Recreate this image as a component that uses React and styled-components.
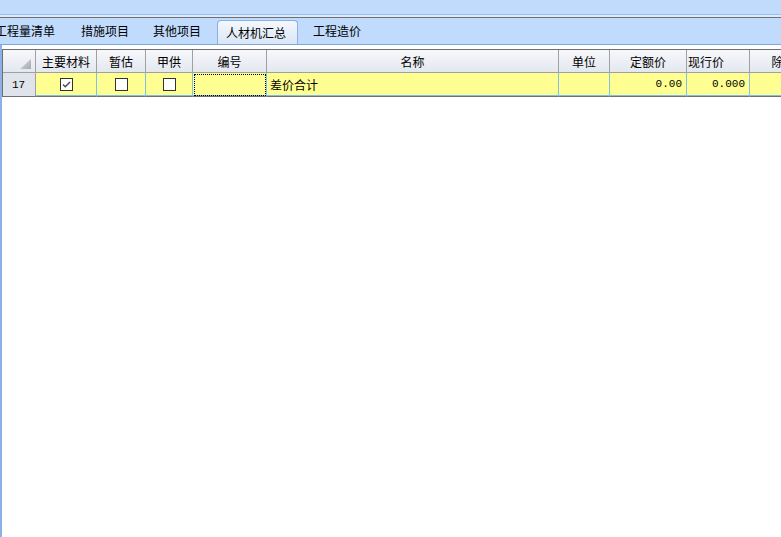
import React from 'react'
import styled, { createGlobalStyle } from 'styled-components'

const GlobalStyle = createGlobalStyle`
  html, body {
    margin: 0;
    padding: 0;
    background: #ffffff;
  }
  body {
    width: 781px;
    height: 537px;
    overflow: hidden;
    font-family: "Noto Sans CJK SC", "Liberation Sans", sans-serif;
    font-size: 12px;
    color: #000;
  }
`

const Page = styled.div`
  width: 781px;
  height: 537px;
  display: flex;
  flex-direction: column;
  overflow: hidden;
`

const TopBand = styled.div`
  height: 14px;
  background: #c1dbfc;
  border-bottom: 1px solid #9ec0ee;
`

const TopGap = styled.div`
  height: 2px;
  background: #dceafd;
  border-bottom: 1px solid #6f6f6f;
`

const TabStrip = styled.div`
  height: 26px;
  background: #c1dbfc;
  border-bottom: 1px solid #7ea6de;
  display: flex;
  align-items: flex-end;
  margin-left: -17px;
  box-sizing: content-box;
`

const Tab = styled.div`
  height: ${p => (p.$active ? '24px' : '26px')};
  padding: ${p => (p.$active ? '0 11px 1px 8px' : '0 12px 2px 12px')};
  margin: ${p => (p.$active ? '0 3px 0 4px' : '0')};
  display: flex;
  align-items: center;
  white-space: nowrap;
  box-sizing: border-box;
  ${p =>
    p.$active &&
    `
    background: linear-gradient(#f4f7fc, #dae6f6);
    border: 1px solid #8cb0e0;
    border-bottom: none;
    border-radius: 4px 4px 0 0;
  `}
  &:first-child {
    padding-right: 14px;
  }
`

const Body = styled.div`
  flex: 1;
  display: flex;
`

const SideStrip = styled.div`
  width: 2px;
  background: #8cb0e8;
`

const GridArea = styled.div`
  flex: 1;
  padding-top: 4px;
  overflow: hidden;
`

const Grid = styled.div`
  display: grid;
  grid-template-columns: 33px 61px 49px 47px 74px 292px 51px 77px 63px 80px;
  border-top: 1px solid #6f6f6f;
  border-left: 1px solid #6f6f6f;
  width: max-content;
`

const HeadCell = styled.div`
  height: 23px;
  box-sizing: border-box;
  background: linear-gradient(#f7f8fb, #e3e7ef);
  border-right: 1px solid #a0a0a0;
  border-bottom: 1px solid #a0a0a0;
  display: flex;
  align-items: center;
  justify-content: ${p => (p.$left ? 'flex-start' : 'center')};
  padding-left: ${p => (p.$left ? '1px' : '0')};
  position: relative;
  white-space: nowrap;
`

const Corner = styled.svg`
  position: absolute;
  right: 4px;
  bottom: 3px;
`

const RowHead = styled.div`
  height: 24px;
  box-sizing: border-box;
  background: #dfe3eb;
  border-right: 1px solid #a0a0a0;
  border-bottom: 1px solid #707070;
  display: flex;
  align-items: center;
  padding-left: 9px;
  font-family: "Liberation Mono", "DejaVu Sans Mono", monospace;
  font-size: 11px;
`

const Cell = styled.div`
  height: 24px;
  box-sizing: border-box;
  background: #ffff91;
  border-right: 1px solid #7fbfef;
  border-bottom: 1px solid #707070;
  box-shadow: inset 0 -1px 0 #7fbfef;
  display: flex;
  align-items: center;
  justify-content: ${p =>
    p.$align === 'right' ? 'flex-end' : p.$align === 'center' ? 'center' : 'flex-start'};
  padding: ${p => (p.$align === 'right' ? '0 4px 1px 0' : p.$align === 'center' ? '0 0 1px 0' : '0 0 1px 3px')};
  white-space: nowrap;
  ${p =>
    p.$focused &&
    `
    outline: 1px dotted #000;
    outline-offset: -2px;
  `}
`

const Num = styled.span`
  font-family: "Liberation Mono", "DejaVu Sans Mono", monospace;
  font-size: 11px;
`

const Box = styled.span`
  width: 13px;
  height: 13px;
  box-sizing: border-box;
  border: 1px solid #333;
  background: #fff;
  display: flex;
  align-items: center;
  justify-content: center;
`

const CheckBox = ({ checked }) => (
  <Box>
    {checked && (
      <svg width="11" height="11" viewBox="0 0 11 11">
        <path d="M2 5.5 L4.3 7.8 L9 3" fill="none" stroke="#4a4a4a" strokeWidth="1.4" />
      </svg>
    )}
  </Box>
)

const tabs = ['工程量清单', '措施项目', '其他项目', '人材机汇总', '工程造价']

const App = () => {
  return (
    <Page>
      <GlobalStyle />
      <TopBand />
      <TopGap />
      <TabStrip>
        {tabs.map(t => (
          <Tab key={t} $active={t === '人材机汇总'}>
            {t}
          </Tab>
        ))}
      </TabStrip>
      <Body>
        <SideStrip />
        <GridArea>
          <Grid>
            <HeadCell>
              <Corner width="11" height="10" viewBox="0 0 11 10">
                <defs>
                  <linearGradient id="tri" x1="0" y1="0" x2="1" y2="1">
                    <stop offset="0" stopColor="#d8dbe2" />
                    <stop offset="1" stopColor="#a4a8b0" />
                  </linearGradient>
                </defs>
                <polygon points="11,0 11,10 0,10" fill="url(#tri)" />
              </Corner>
            </HeadCell>
            <HeadCell>主要材料</HeadCell>
            <HeadCell>暂估</HeadCell>
            <HeadCell>甲供</HeadCell>
            <HeadCell>编号</HeadCell>
            <HeadCell>名称</HeadCell>
            <HeadCell>单位</HeadCell>
            <HeadCell>定额价</HeadCell>
            <HeadCell $left>现行价</HeadCell>
            <HeadCell>除税价</HeadCell>

            <RowHead>17</RowHead>
            <Cell $align="center">
              <CheckBox checked />
            </Cell>
            <Cell $align="center">
              <CheckBox />
            </Cell>
            <Cell $align="center">
              <CheckBox />
            </Cell>
            <Cell $focused />
            <Cell>差价合计</Cell>
            <Cell />
            <Cell $align="right">
              <Num>0.00</Num>
            </Cell>
            <Cell $align="right">
              <Num>0.000</Num>
            </Cell>
            <Cell />
          </Grid>
        </GridArea>
      </Body>
    </Page>
  )
}

export default App
